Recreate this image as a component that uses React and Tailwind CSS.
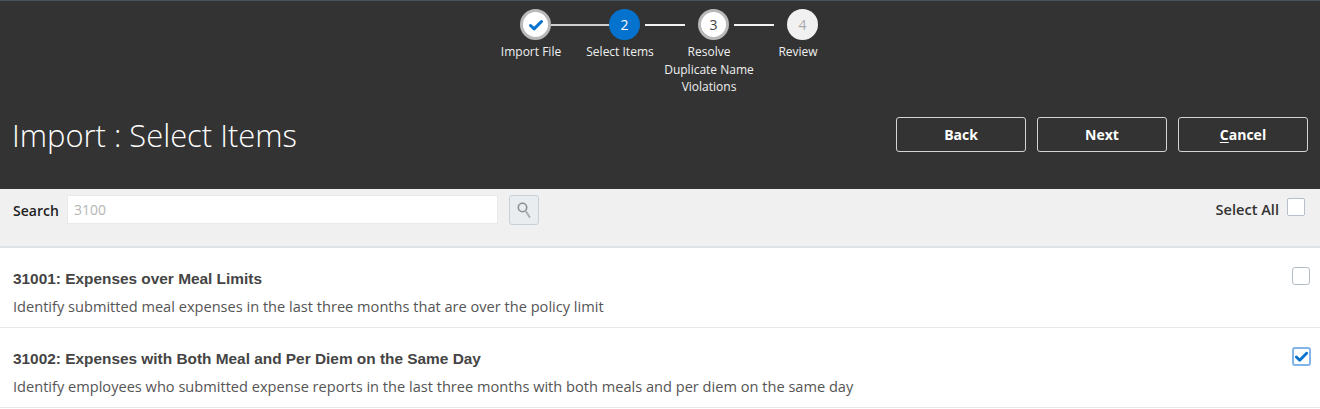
const sans = 'font-["Open_Sans",sans-serif]';

const steps = [
  { label: ['Import File'], state: 'done', left: 'none', right: 'joined' },
  { label: ['Select Items'], state: 'active', left: 'joined', right: 'after' },
  { label: ['Resolve', 'Duplicate Name', 'Violations'], state: 'next', left: 'before', right: 'after' },
  { label: ['Review'], state: 'off', left: 'before', right: 'none' },
];

function Check({ className }) {
  return (
    <svg viewBox="0 0 16 16" className={className} fill="none" stroke="currentColor" strokeWidth="3" strokeLinecap="round" strokeLinejoin="round">
      <path d="M2.5 8.5l3.6 3.4L13.5 4.5" />
    </svg>
  );
}

function Circle({ state, n }) {
  if (state === 'done') {
    return (
      <div className="grid h-[31px] w-[31px] shrink-0 place-items-center rounded-full border-[3px] border-[#b9b9b9] bg-white text-[#0572ce]">
        <Check className="h-[16px] w-[16px]" />
      </div>
    );
  }
  if (state === 'active') {
    return <div className="grid h-[31px] w-[31px] shrink-0 place-items-center rounded-full bg-[#0572ce] text-[14px] font-normal text-white">{n}</div>;
  }
  if (state === 'next') {
    return <div className="grid h-[31px] w-[31px] shrink-0 place-items-center rounded-full border-[3px] border-[#b9b9b9] bg-white text-[14px] font-normal text-[#444]">{n}</div>;
  }
  return <div className="grid h-[31px] w-[31px] shrink-0 place-items-center rounded-full bg-[#f1f1f1] text-[14px] font-normal text-[#aaa]">{n}</div>;
}

// half of a connector, each half is 29px wide next to its circle
function Line({ kind }) {
  if (kind === 'none') return <div className="w-[29px] shrink-0" />;
  if (kind === 'joined') return <div className="h-[2px] w-[29px] shrink-0 bg-[#d0d0d0]" />;
  return (
    <div className="w-[29px] shrink-0">
      <div className={`h-[2px] bg-[#f2f2f2] ${kind === 'after' ? 'ml-[5px]' : 'mr-[13px]'}`} />
    </div>
  );
}

function Btn({ children }) {
  return (
    <button className="h-[35px] w-[130px] rounded-[3px] border border-[#d4d4d4] text-[14px] font-bold text-white">
      {children}
    </button>
  );
}

function Row({ title, desc, checked }) {
  return (
    <div className="flex h-[80px] items-start justify-between border-b border-[#e6e8ea] bg-white pl-[13px] pr-[9px]">
      <div className="pt-[22px]">
        <div className='font-["Liberation_Sans",sans-serif] text-[15.4px] leading-[18px] font-bold text-[#444]'>{title}</div>
        <div className="mt-[9px] text-[14.6px] leading-[18px] text-[#555]">{desc}</div>
      </div>
      {checked ? (
        <div className="mt-[19px] grid h-[19px] w-[19px] place-items-center rounded-[3px] border-2 border-[#82b4e8] bg-white text-[#0572ce]">
          <Check className="h-[15px] w-[15px]" />
        </div>
      ) : (
        <div className="mt-[19px] mr-px h-[18px] w-[18px] rounded-[3px] border border-[#b4bcc4] bg-white" />
      )}
    </div>
  );
}

export default function App() {
  return (
    <div className={`h-[409px] w-[1320px] overflow-hidden bg-white ${sans}`}>
      <div className="h-[189px] border-t border-[#46535f] bg-[#333333] text-white">
        <div className="flex h-[96px] pt-[8px] pl-[491px]">
          {steps.map((s, i) => (
            <div key={i} className="w-[89px] text-center">
              <div className="flex items-center">
                <Line kind={s.left} />
                <Circle state={s.state} n={i + 1} />
                <Line kind={s.right} />
              </div>
              <div className="mt-[3px] ml-[-9px] text-[12px] leading-[17.5px] text-[#f0f0f0]">
                {s.label.map((l) => <div key={l} className="whitespace-nowrap">{l}</div>)}
              </div>
            </div>
          ))}
        </div>
        <div className="mt-[20px] flex h-[35px] items-center justify-between pr-[12px] pl-[12px]">
          <h1 className="text-[30.9px] leading-[40px] font-light">Import : Select Items</h1>
          <div className="flex gap-[11px]">
            <Btn>Back</Btn>
            <Btn>Next</Btn>
            <Btn><span className="underline underline-offset-2">C</span>ancel</Btn>
          </div>
        </div>
      </div>

      <div className="flex h-[59px] items-start justify-between border-b-2 border-[#dfe3e8] bg-[#f0f0f0] pr-[15px] pl-[13px]">
        <div className="flex items-start pt-[6px]">
          <span className="w-[54px] pt-[6px] text-[14px] leading-[19px] font-semibold text-[#222]">Search</span>
          <div className="flex h-[29px] w-[431px] items-center border border-[#e9e9e9] bg-white pl-[6px] text-[14px] text-[#b5b5b5]">3100</div>
          <button className="ml-[11px] grid h-[30px] w-[30px] place-items-center rounded-[3px] border border-[#c8d0d6] bg-[#e9edef]">
            <svg viewBox="0 0 20 20" className="h-[20px] w-[20px]" fill="none">
              <circle cx="8.5" cy="7.5" r="4.2" stroke="#8a8f94" strokeWidth="1.6" />
              <path d="M12 11.5l3.5 5.5" stroke="#a9afb4" strokeWidth="2" strokeLinecap="round" />
            </svg>
          </button>
        </div>
        <div className="flex items-start pt-[9px]">
          <span className="pt-[2px] text-[14.6px] leading-[19px] font-semibold text-[#333]">Select All</span>
          <div className="ml-[8px] h-[18px] w-[18px] rounded-[2px] border border-[#b8bfc6] bg-white" />
        </div>
      </div>

      <Row
        title="31001: Expenses over Meal Limits"
        desc="Identify submitted meal expenses in the last three months that are over the policy limit"
      />
      <Row
        checked
        title="31002: Expenses with Both Meal and Per Diem on the Same Day"
        desc="Identify employees who submitted expense reports in the last three months with both meals and per diem on the same day"
      />
    </div>
  );
}
